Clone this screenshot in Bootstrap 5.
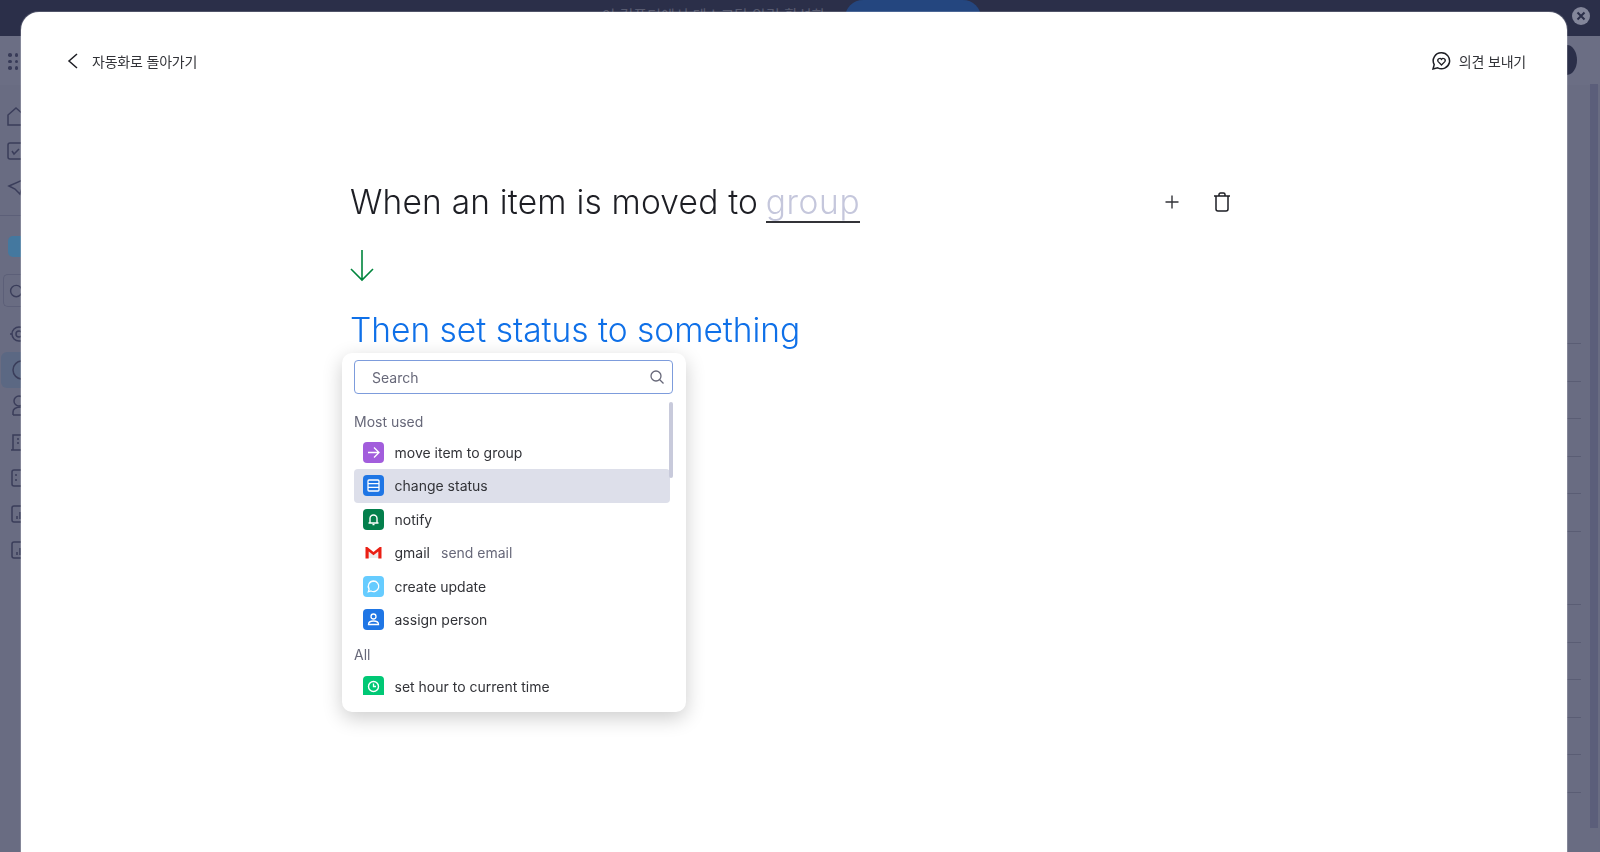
<!DOCTYPE html>
<html lang="ko">
<head>
<meta charset="utf-8">
<title>Automation</title>
<link href="https://cdn.jsdelivr.net/npm/bootstrap@5.3.0/dist/css/bootstrap.min.css" rel="stylesheet">
<style>
html,body{height:100%;overflow:hidden}
body{background:#696c82;font-family:"Inter","Noto Sans CJK KR",sans-serif;color:#323338}
.app-top{height:36px;background:#2b2f49;color:#585b70;font-size:15px;padding-right:17px;gap:20px}
.app-top .upg{background:#24467f;color:#4f6a96;border-radius:18px;width:136px;height:44px;font-size:14px;padding-bottom:8px;padding-top:3px}
.app-top .msg{margin-top:5px}
.app-band{height:49px;background:#6b6e84}
.app-dots{width:12px;padding:17px 0 0 8px;box-sizing:content-box;gap:3px}
.app-dots i{width:3.500px;height:3.500px;border-radius:50%;background:#383b58;display:block}
.app-rail{width:21px;flex:none}
.rail-item{height:36px;flex:none;display:flex;align-items:center}
.rail-item svg{display:block;stroke:#3a3d5a;fill:none;stroke-width:1.500}
.r-first{margin-top:12px}
.rail-sep{height:1px;background:#5c5f78;margin-top:10px}
.rail-blue{height:21px;background:#44789f;border-radius:5px 0 0 5px;margin:20px 0 0 8px}
.rail-search{border:1px solid #5c5f78;border-right:0;height:33px;margin:17px 0 9px 3px;border-radius:5px 0 0 5px}
.rail-sel{background:#5b6883;border-radius:6px 0 0 6px;margin-left:1px}
.app-gutter{width:33px;flex:none;margin-right:0}
.g-rules{width:14px;padding-top:258px}
.g-rule{height:1px;width:14px;background:#5a5d74;margin-bottom:36.500px}
.g-gap{height:36px}
.g-col{width:8px;background:#5b5e7a;height:744px;margin:-1px 2px 0 0}
.close-x{width:18px;height:18px;border-radius:50%;background:#83869a;right:10px;top:7px}
.avatar-peek{width:20px;height:30px;background:#2b2f49;border-radius:50%;left:1557px;top:45px}
.sheet{left:21px;top:12px;width:1546px;height:850px;background:#fff;border-radius:18px 18px 0 0;box-shadow:0 0 0 1px rgba(255,255,255,.18)}
.sheet-head{padding:37px 41px 0 45px;height:167px;font-size:14px;color:#323338;letter-spacing:-.2px}
.builder{margin-left:329px;width:908px}
.sent{font-family:"Inter","Noto Sans",sans-serif;font-size:33.500px;line-height:46px;font-weight:300;letter-spacing:.2px;color:#1d1e24;white-space:nowrap}
.sent-then{color:#0f70e8;letter-spacing:0}
.slot{color:#c5c7dc;border-bottom:2px solid #323338;display:inline-block;line-height:38px;height:40px;margin-left:-2px;letter-spacing:.6px}
.tools{gap:30px;padding-right:26px}
.arrow-row{height:82px;padding-top:24px}
.picker{left:321px;top:341px;width:344px;height:359px;border-radius:10px;box-shadow:0 6px 20px rgba(0,0,0,.2);background:#fff;padding:7px 13px 7px 12px}
.pick-search{height:34px;border:1px solid #7d9cdc;border-radius:4px;padding:0 7px 0 17px;font-size:14px;color:#676879}
.pick-scroll{top:49px;right:13px;width:4px;height:76px;background:#c8cadb;border-radius:2px}
.pick-title{font-size:14px;color:#676879;line-height:20px;margin-top:18px;margin-bottom:3.500px}
.pick-title.t-all{margin-top:8.500px;margin-bottom:5px}
.pick-row{height:33.500px;padding-left:8.500px;gap:11px;font-size:14px;width:316px;border-radius:4px;color:#323338;white-space:nowrap}
.pick-row.on{background:#dddfea}
.pick-ico{width:21px;height:21px;border-radius:4px;flex:none;overflow:hidden}
.pick-ico.cut{height:19px;border-radius:4px 4px 0 0;margin-bottom:3px}
.pick-ico svg{display:block}
.pi-purple{background:#a25ddc}.pi-blue{background:#1f76e5}.pi-green{background:#037f4c}.pi-sky{background:#66ccff}.pi-lime{background:#00c875}
.pick-sub{color:#676879;margin-left:0}
</style>
</head>
<body>
<div class="app-top d-flex justify-content-center overflow-hidden">
  <span class="msg">이 컴퓨터에서 데스크탑 알림 활성화</span>
  <span class="upg d-flex align-items-center justify-content-center">지금 활성화</span>
</div>
<div class="app-band">
  <div class="app-dots d-flex flex-wrap">
    <i></i><i></i><i></i><i></i><i></i><i></i>
  </div>
</div>
<div class="d-flex justify-content-between">
  <div class="app-rail d-flex flex-column">
    <div class="rail-item r-first"><svg width="21" height="22" viewBox="0 0 21 22"><path d="M8 11l8-7 8 7v10H8z"/></svg></div>
    <div class="rail-item"><svg width="21" height="22" viewBox="0 0 21 22"><rect x="8" y="3" width="16" height="16" rx="2"/><path d="M12 11l2 3 5-5"/></svg></div>
    <div class="rail-item"><svg width="21" height="20" viewBox="0 0 21 20"><path d="M9 9l16-7-5 15-5-5z"/></svg></div>
    <div class="rail-sep"></div>
    <div class="rail-blue"></div>
    <div class="rail-search d-flex align-items-center"><svg width="18" height="18" viewBox="0 0 18 18" fill="none" stroke="#3a3d5a" stroke-width="1.500"><circle cx="13" cy="9" r="6"/></svg></div>
    <div class="rail-item"><svg width="21" height="22" viewBox="0 0 21 22"><circle cx="19" cy="11" r="7"/><circle cx="19" cy="11" r="3"/><path d="M10 11h2"/></svg></div>
    <div class="rail-item rail-sel"><svg width="20" height="26" viewBox="0 0 20 26"><circle cx="21" cy="13" r="9"/></svg></div>
    <div class="rail-item"><svg width="21" height="22" viewBox="0 0 21 22"><circle cx="19" cy="6" r="5"/><path d="M13 20v-3c0-3 3-5 9-5M13 20h8"/></svg></div>
    <div class="rail-item"><svg width="21" height="22" viewBox="0 0 21 22"><path d="M13 19V4h10M11 19h10M17 8h2M17 12h2"/></svg></div>
    <div class="rail-item"><svg width="21" height="22" viewBox="0 0 21 22"><rect x="12" y="3" width="14" height="16" rx="2"/><path d="M15 8h2M15 13h2"/></svg></div>
    <div class="rail-item"><svg width="21" height="22" viewBox="0 0 21 22"><rect x="12" y="3" width="14" height="16" rx="2"/><path d="M17 16v-3M20 16V9"/></svg></div>
    <div class="rail-item"><svg width="21" height="22" viewBox="0 0 21 22"><rect x="12" y="3" width="14" height="16" rx="2"/><path d="M17 16v-3M20 16V9"/></svg></div>
  </div>
  <div class="app-gutter d-flex justify-content-between">
    <div class="g-rules">
      <div class="g-rule"></div><div class="g-rule"></div><div class="g-rule"></div><div class="g-rule"></div><div class="g-rule"></div><div class="g-rule"></div>
      <div class="g-gap"></div>
      <div class="g-rule"></div><div class="g-rule"></div><div class="g-rule"></div><div class="g-rule"></div><div class="g-rule"></div><div class="g-rule"></div>
    </div>
    <div class="g-col"></div>
  </div>
</div>
<div class="avatar-peek position-fixed"></div>
<div class="close-x position-fixed d-flex align-items-center justify-content-center">
  <svg width="10" height="10" viewBox="0 0 10 10"><path d="M1.500 1.500l7 7M8.500 1.500l-7 7" stroke="#2b2f49" stroke-width="2"/></svg>
</div>

<div class="sheet position-fixed">
  <div class="sheet-head d-flex justify-content-between align-items-start">
    <div class="d-flex align-items-center gap-2">
      <svg class="me-1" width="14" height="24" viewBox="0 0 14 24"><path d="M11 5l-8 7 8 7" fill="none" stroke="#1d1e24" stroke-width="1.500"/></svg>
      <span>자동화로 돌아가기</span>
    </div>
    <div class="d-flex align-items-center gap-2">
      <svg width="20" height="24" viewBox="0 0 20 24"><path d="M10.500 3.800a8 8 0 1 1-3.800 15L2 20l1.200-4.400A8 8 0 0 1 10.500 3.800z" fill="none" stroke="#1d1e24" stroke-width="1.500"/><path d="M10.500 16l-3.300-3.400a2 2 0 0 1 3.300-2.300 2 2 0 0 1 3.300 2.300z" fill="none" stroke="#1d1e24" stroke-width="1.300"/></svg>
      <span>의견 보내기</span>
    </div>
  </div>
  <div class="builder">
    <div class="d-flex justify-content-between align-items-center">
      <div class="sent">When an item is moved to <span class="slot">group</span></div>
      <div class="d-flex align-items-center tools">
        <svg width="20" height="20" viewBox="0 0 20 20"><path d="M10 3.500v13M3.500 10h13" stroke="#323338" stroke-width="1.400"/></svg>
        <svg width="20" height="22" viewBox="0 0 20 22"><path d="M2 5h16M7 5V3.500C7 2.700 7.600 2 8.500 2h3c.9 0 1.500.7 1.500 1.500V5M4 5v13c0 1 .8 2 2 2h8c1.200 0 2-1 2-2V5" fill="none" stroke="#1d1e24" stroke-width="1.500"/></svg>
      </div>
    </div>
    <div class="arrow-row">
      <svg class="d-block" width="24" height="34" viewBox="0 0 24 34"><path d="M12 1v30M1 20l11 11 11-11" fill="none" stroke="#00853d" stroke-width="1.600"/></svg>
    </div>
    <div class="sent sent-then">Then set status to something</div>
  </div>
  <div class="picker position-absolute">
    <div class="pick-search d-flex align-items-center justify-content-between">
      <span>Search</span>
      <svg width="16" height="16" viewBox="0 0 16 16"><circle cx="7" cy="7" r="5" fill="none" stroke="#676879" stroke-width="1.300"/><path d="M10.500 10.500l4 4" stroke="#676879" stroke-width="1.300"/></svg>
    </div>
    <div class="pick-scroll position-absolute"></div>
    <div class="pick-title">Most used</div>
    <div class="pick-row d-flex align-items-center">
      <span class="pick-ico pi-purple"><svg width="21" height="21" viewBox="0 0 21 21"><path d="M5 10.500h11M11 5.500l5 5-5 5" fill="none" stroke="#fff" stroke-width="1.300"/></svg></span>move item to group
    </div>
    <div class="pick-row on d-flex align-items-center">
      <span class="pick-ico pi-blue"><svg width="21" height="21" viewBox="0 0 21 21"><rect x="5" y="5" width="11" height="11" rx="1" fill="none" stroke="#fff" stroke-width="1.300"/><path d="M5 8.700h11M5 12.300h11" stroke="#fff" stroke-width="1.300"/></svg></span>change status
    </div>
    <div class="pick-row d-flex align-items-center">
      <span class="pick-ico pi-green"><svg width="21" height="21" viewBox="0 0 21 21"><path d="M7 14V9.500a3.500 3.500 0 0 1 7 0V14zM5.500 14h10" fill="none" stroke="#fff" stroke-width="1.400"/><path d="M9.500 15.500h2" stroke="#fff" stroke-width="1.400"/></svg></span>notify
    </div>
    <div class="pick-row d-flex align-items-center">
      <span class="pick-ico"><svg width="21" height="21" viewBox="0 0 21 21"><path d="M6 9.500l4.500 3.700L15 9.500V16H6z" fill="#ececec"/><path d="M2.500 16.500V5h1.800l6.200 5 6.200-5h1.800v11.500h-3.200V9.500l-4.800 3.800-4.800-3.800v7z" fill="#ea1f14"/></svg></span>
      <span>gmail</span><span class="pick-sub">send email</span>
    </div>
    <div class="pick-row d-flex align-items-center">
      <span class="pick-ico pi-sky"><svg width="21" height="21" viewBox="0 0 21 21"><path d="M10.500 5a5.300 5.300 0 1 1-2.500 10l-2.700.8.800-2.700A5.300 5.300 0 0 1 10.500 5z" fill="none" stroke="#fff" stroke-width="1.300"/></svg></span>create update
    </div>
    <div class="pick-row d-flex align-items-center">
      <span class="pick-ico pi-blue"><svg width="21" height="21" viewBox="0 0 21 21"><circle cx="10.500" cy="7.500" r="2.500" fill="none" stroke="#fff" stroke-width="1.300"/><path d="M5.500 15.500c0-2.500 2-3.500 5-3.500s5 1 5 3.500z" fill="none" stroke="#fff" stroke-width="1.300"/></svg></span>assign person
    </div>
    <div class="pick-title t-all">All</div>
    <div class="pick-row d-flex align-items-center">
      <span class="pick-ico cut pi-lime"><svg width="21" height="21" viewBox="0 0 21 21"><circle cx="10.500" cy="10.500" r="5" fill="none" stroke="#fff" stroke-width="1.400"/><path d="M10.500 7.500v3h2.500" fill="none" stroke="#fff" stroke-width="1.300"/></svg></span>set hour to current time
    </div>
  </div>
</div>
<script src="https://cdn.jsdelivr.net/npm/bootstrap@5.3.0/dist/js/bootstrap.bundle.min.js"></script>
</body>
</html>
